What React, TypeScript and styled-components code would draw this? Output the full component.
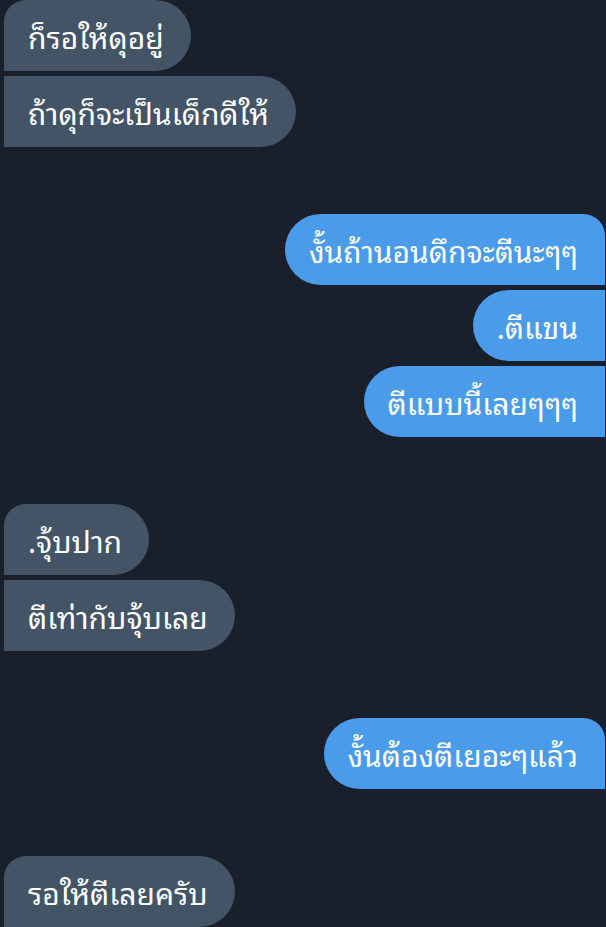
import React from "react";
import styled, { createGlobalStyle, css } from "styled-components";

const Global = createGlobalStyle`
  html, body {
    margin: 0;
    padding: 0;
    background: #19202b;
  }
  body {
    font-family: "Noto Sans Thai Looped", "Noto Sans Thai", "Noto Sans", "DejaVu Sans", sans-serif;
  }
`;

const Page = styled.div`
  width: 606px;
  min-height: 927px;
  background: #19202b;
  display: flex;
  flex-direction: column;
  gap: 67px;
  padding: 0 1px 0 4px;
  box-sizing: border-box;
  overflow: hidden;
`;

const Group = styled.div<{ $mine: boolean }>`
  display: flex;
  flex-direction: column;
  gap: 5px;
  align-items: ${(p) => (p.$mine ? "flex-end" : "flex-start")};
`;

const Bubble = styled.div<{ $mine: boolean; $first: boolean }>`
  height: 71px;
  box-sizing: border-box;
  display: flex;
  align-items: center;
  padding: 0 27px 0 24px;
  font-size: 30px;
  color: #ffffff;
  white-space: nowrap;
  ${(p) =>
    p.$mine
      ? css`
          background: #4a9bea;
          border-radius: 36px ${p.$first ? "22px" : "0"} 0 36px;
        `
      : css`
          background: #425466;
          border-radius: ${p.$first ? "22px" : "0"} 36px 36px 0;
        `}
`;

const groups: { mine: boolean; msgs: string[] }[] = [
  { mine: false, msgs: ["ก็รอให้ดุอยู่", "ถ้าดุก็จะเป็นเด็กดีให้"] },
  { mine: true, msgs: ["งั้นถ้านอนดึกจะตีนะๆๆ", ".ตีแขน", "ตีแบบนี้เลยๆๆๆ"] },
  { mine: false, msgs: [".จุ้บปาก", "ตีเท่ากับจุ้บเลย"] },
  { mine: true, msgs: ["งั้นต้องตีเยอะๆแล้ว"] },
  { mine: false, msgs: ["รอให้ตีเลยครับ"] },
];

export default function App() {
  return (
    <>
      <Global />
      <Page>
        {groups.map((g, gi) => (
          <Group key={gi} $mine={g.mine}>
            {g.msgs.map((m, i) => (
              <Bubble key={i} $mine={g.mine} $first={i === 0}>
                {m}
              </Bubble>
            ))}
          </Group>
        ))}
      </Page>
    </>
  );
}
